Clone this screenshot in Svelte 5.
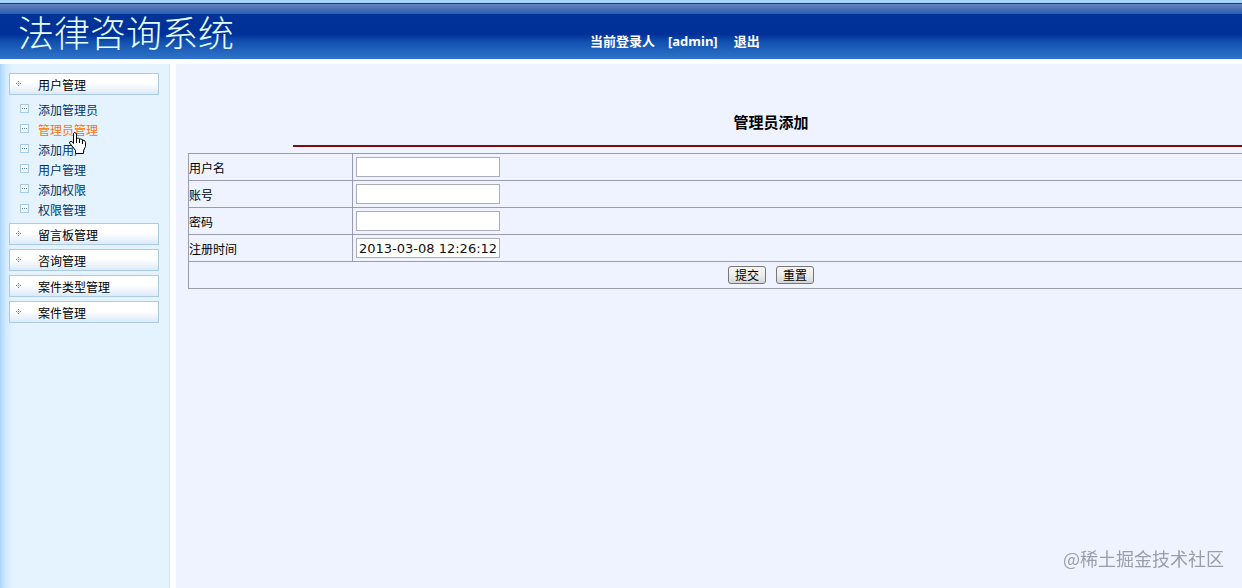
<script>
  let aberto = $state(0);
  let usuario = $state('');
  let conta = $state('');
  let senha = $state('');
  let data = $state('2013-03-08 12:26:12');

  const menu = [
    { titulo: '用户管理', itens: ['添加管理员', '管理员管理', '添加用户', '用户管理', '添加权限', '权限管理'] },
    { titulo: '留言板管理', itens: [] },
    { titulo: '咨询管理', itens: [] },
    { titulo: '案件类型管理', itens: [] },
    { titulo: '案件管理', itens: [] }
  ];
  const ativo = '管理员管理';

  function limpar() {
    usuario = '';
    conta = '';
    senha = '';
  }
</script>

<div class="page">
  <header>
    <div class="logo">法律咨询系统</div>
    <div class="session">
      <span>当前登录人</span>
      <span class="login">[admin]</span>
      <a href="#sair">退出</a>
    </div>
  </header>

  <div class="body">
    <nav>
      {#each menu as grupo, i}
        <button class="group" onclick={() => (aberto = i)}>
          <svg width="5" height="5" viewBox="0 0 5 5" shape-rendering="crispEdges">
            <path d="M2 0h1v1h-1zM0 2h1v1h-1zM2 2h1v1h-1zM4 2h1v1h-1zM2 4h1v1h-1z" fill="#4f87b5" />
            <path d="M1 1h1v1h-1zM3 1h1v1h-1zM1 3h1v1h-1zM3 3h1v1h-1z" fill="#bcd6ea" />
          </svg>
          {grupo.titulo}
        </button>
        {#if aberto === i && grupo.itens.length}
          <ul>
            {#each grupo.itens as item}
              <li>
                <svg width="9" height="9" viewBox="0 0 9 9" shape-rendering="crispEdges">
                  <rect width="9" height="9" fill="#a9cbe6" />
                  <rect x="1" y="1" width="7" height="7" fill="#f4faff" />
                  <path d="M2 4h1v1h-1zM4 4h1v1h-1zM6 4h1v1h-1z" fill="#5b83a8" />
                </svg>
                <a href="#item" class:active={item === ativo}>{item}</a>
                {#if item === ativo}
                  <svg class="cursor" width="17" height="22" viewBox="0 0 17 22">
                    <path
                      d="M4.500 1.500L5.500 .5L7.500 1.500V6.500L9.500 6L10.500 7L12.500 7L13.500 8L15.500 8.500L16.500 10.500V14.500L14.500 18.500V21.500H6.500V18.500L3.500 14.500L.5 11L1 9.500L3 9.500L4.500 11.500Z"
                      fill="#fff"
                      stroke="#000"
                    />
                    <path d="M7.500 6v5M10.500 7v4M13.500 8v4" fill="none" stroke="#000" />
                  </svg>
                {/if}
              </li>
            {/each}
          </ul>
        {/if}
      {/each}
    </nav>

    <main>
      <form onsubmit={(e) => e.preventDefault()}>
        <h1>管理员添加</h1>
        <hr />
        <table>
          <tbody>
            <tr>
              <td class="name"><label for="usuario">用户名</label></td>
              <td><input id="usuario" type="text" bind:value={usuario} /></td>
            </tr>
            <tr>
              <td class="name"><label for="conta">账号</label></td>
              <td><input id="conta" type="text" bind:value={conta} /></td>
            </tr>
            <tr>
              <td class="name"><label for="senha">密码</label></td>
              <td><input id="senha" type="password" bind:value={senha} /></td>
            </tr>
            <tr>
              <td class="name"><label for="data">注册时间</label></td>
              <td><input id="data" type="text" bind:value={data} /></td>
            </tr>
            <tr>
              <td colspan="2">
                <div class="actions">
                  <button type="submit">提交</button>
                  <button type="button" onclick={limpar}>重置</button>
                </div>
              </td>
            </tr>
          </tbody>
        </table>
      </form>
    </main>
  </div>

  <div class="watermark">@稀土掘金技术社区</div>
</div>

<style>
  :global(body) {
    margin: 0;
    background: #fff;
  }

  .page {
    display: flex;
    flex-direction: column;
    min-height: 100vh;
    font-family: "Noto Sans CJK SC", sans-serif;
    font-size: 12px;
    line-height: 20px;
    color: #000;
  }

  header {
    display: grid;
    grid-template-columns: 590px 1fr;
    height: 59px;
    background: linear-gradient(#a6d5fb 0, #a6d5fb 3px, #0c3a86 3px, #0c3a86 4px, #6b84bd 4px, #2a5db0 14px, #003399 14px, #003098 34px, #1251b0 42px, #2e74c9 59px);
    color: #fff;
  }

  .logo {
    padding-left: 18px;
    font-size: 36px;
    font-weight: 300;
    line-height: 62px;
    color: #e4ffff;
    white-space: nowrap;
  }

  .session {
    display: flex;
    gap: 13px;
    padding-top: 31px;
    font-size: 13px;
    font-weight: bold;
    white-space: nowrap;
  }

  .session a {
    margin-left: 3px;
    color: #fff;
    text-decoration: none;
  }

  .login {
    font-family: "Noto Sans", sans-serif;
  }

  .body {
    flex: 1;
    display: flex;
    gap: 6px;
    padding-top: 5px;
  }

  nav {
    flex: none;
    box-sizing: border-box;
    width: 170px;
    padding: 9px 10px 0 9px;
    border-right: 1px solid #d9e6f5;
    background: linear-gradient(90deg, #a9d6fb 0, #d3ebff 6px, #e5f3ff 14px, #e5f3ff 100%);
  }

  .group {
    display: flex;
    align-items: center;
    gap: 17px;
    width: 100%;
    height: 22px;
    margin-bottom: 4px;
    padding: 1px 0 0 6px;
    border: 1px solid #a9cbe6;
    background: linear-gradient(#fff 0, #fff 45%, #dde9f8 100%);
    font: inherit;
    color: #000;
    cursor: pointer;
  }

  .group svg {
    margin-bottom: 3px;
  }

  ul {
    margin: 0;
    padding: 1px 0 3px 11px;
    list-style: none;
  }

  li {
    position: relative;
    display: flex;
    align-items: center;
    gap: 9px;
    height: 20px;
  }

  li svg {
    margin-bottom: 3px;
  }

  li a {
    color: #003366;
    text-decoration: none;
  }

  li a.active {
    color: #ff7300;
  }

  .cursor {
    position: absolute;
    z-index: 1;
    top: 12px;
    left: 49px;
  }

  main {
    flex: 1;
    min-width: 0;
    overflow: hidden;
    background: #eff3ff;
  }

  /* the form is wider than the frame, its right edge is cut */
  form {
    width: calc(100% + 100px);
    padding: 46px 0 0 12px;
  }

  h1 {
    margin: 0;
    font-size: 15px;
    font-weight: bold;
    line-height: 24px;
    text-align: center;
  }

  hr {
    width: 82%;
    height: 2px;
    margin: 11px auto 6px;
    border: 0;
    background: #7b0c10;
  }

  table {
    width: 100%;
    border-collapse: collapse;
  }

  td {
    height: 26px;
    padding: 0 3px;
    border: 1px solid #989cac;
  }

  .name {
    width: 163px;
    padding: 2px 0 0;
    height: 24px;
  }

  input {
    display: block;
    box-sizing: border-box;
    width: 144px;
    height: 20px;
    padding: 0 2px;
    border: 1px solid #abadb8;
    background: #fff;
    font-family: "DejaVu Sans", sans-serif;
    font-size: 13px;
    color: #111;
  }

  .actions {
    display: flex;
    justify-content: center;
    gap: 10px;
  }

  .actions button {
    width: 38px;
    height: 18px;
    padding: 0;
    border: 1px solid #777;
    border-radius: 3px;
    background: linear-gradient(#f5f5f5 0, #ededed 50%, #d5d5d5 100%);
    font: inherit;
    line-height: 16px;
  }

  .watermark {
    position: fixed;
    right: 18px;
    bottom: 18px;
    font-size: 18px;
    line-height: 24px;
    color: #9a9ea8;
  }
</style>
